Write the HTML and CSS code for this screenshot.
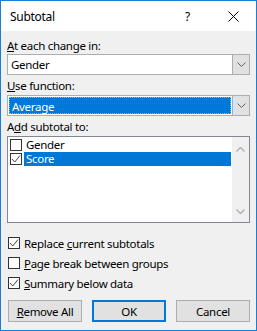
FILE: index.html
```html
<!DOCTYPE html>
<html lang="en">
<head>
    <meta charset="UTF-8">
    <title>Subtotal</title>
    <link rel="stylesheet" href="styles.css">
</head>
<body>
<div class="dialog">
    <div class="titlebar">
        <span class="title">Subtotal</span>
        <span class="help">?</span>
        <span class="close">
            <svg width="11" height="11" viewBox="0 0 11 11"><path d="M0.5 0.5L10.5 10.5M10.5 0.5L0.5 10.5" stroke="#000" stroke-width="1" fill="none"/></svg>
        </span>
    </div>
    <div class="body">
        <div class="field-label first"><u>A</u>t each change in:</div>
        <div class="combo">
            <span class="combo-value">Gender</span>
            <span class="combo-btn">
                <svg width="9" height="5" viewBox="0 0 9 5"><path d="M0.5 0.5L4.5 4.5L8.5 0.5" stroke="#606060" fill="none"/></svg>
            </span>
        </div>

        <div class="field-label"><u>U</u>se function:</div>
        <div class="combo focused">
            <span class="combo-value"><span class="combo-sel">Average</span></span>
            <span class="combo-btn">
                <svg width="9" height="5" viewBox="0 0 9 5"><path d="M0.5 0.5L4.5 4.5L8.5 0.5" stroke="#606060" fill="none"/></svg>
            </span>
        </div>

        <div class="field-label">A<u>d</u>d subtotal to:</div>
        <div class="listbox">
            <ul class="items">
                <li class="item">
                    <span class="check"></span>
                    <span class="item-text">Gender</span>
                </li>
                <li class="item selected">
                    <span class="check">
                        <svg width="10" height="10" viewBox="0 0 10 10"><path d="M1 5L3.8 8L9 1.5" stroke="#444" stroke-width="1" fill="none"/></svg>
                    </span>
                    <span class="item-text">Score</span>
                </li>
            </ul>
            <div class="scrollbar">
                <svg width="9" height="5" viewBox="0 0 9 5"><path d="M0.5 4.5L4.5 0.5L8.5 4.5" stroke="#b0b0b0" stroke-width="1.4" fill="none"/></svg>
                <svg width="9" height="5" viewBox="0 0 9 5"><path d="M0.5 0.5L4.5 4.5L8.5 0.5" stroke="#b0b0b0" stroke-width="1.4" fill="none"/></svg>
            </div>
        </div>

        <div class="options">
            <div class="option">
                <span class="check">
                    <svg width="10" height="10" viewBox="0 0 10 10"><path d="M1 5L3.8 8L9 1.5" stroke="#444" stroke-width="1" fill="none"/></svg>
                </span>
                <span>Replace <u>c</u>urrent subtotals</span>
            </div>
            <div class="option">
                <span class="check"></span>
                <span><u>P</u>age break between groups</span>
            </div>
            <div class="option">
                <span class="check">
                    <svg width="10" height="10" viewBox="0 0 10 10"><path d="M1 5L3.8 8L9 1.5" stroke="#444" stroke-width="1" fill="none"/></svg>
                </span>
                <span><u>S</u>ummary below data</span>
            </div>
        </div>

        <div class="buttons">
            <div class="button"><u>R</u>emove All</div>
            <div class="button default">OK</div>
            <div class="button">Cancel</div>
        </div>
    </div>
</div>
</body>
</html>
```

FILE: styles.css
```css
* {
    padding: 0;
    margin: 0;
    box-sizing: border-box;
}

html, body {
    width: 100%;
    height: 100%;
    background-color: #f0f0f0;
}

body {
    font-family: "Noto Sans", "DejaVu Sans", sans-serif;
    font-size: 11.5px;
    letter-spacing: -0.3px;
    color: #000;
}

.dialog {
    width: 257px;
    height: 331px;
    border: 1px solid #1a7fd4;
    background-color: #f0f0f0;
    display: flex;
    flex-direction: column;
}

.titlebar {
    height: 30px;
    background-color: #fff;
    display: flex;
    align-items: center;
    padding-left: 9px;
}

.title {
    font-size: 12px;
    flex: 1;
}

.help {
    font-size: 12px;
    width: 8px;
    margin-right: 35px;
}

.close {
    display: flex;
    margin-right: 17px;
}

.body {
    padding: 0 6px;
    display: flex;
    flex-direction: column;
}

.field-label {
    line-height: 16px;
    height: 16px;
    margin-top: 3px;
}

.field-label.first {
    margin-top: 7px;
}

.combo {
    height: 21px;
    border: 1px solid #adadad;
    background-color: #fff;
    display: flex;
}

.focused {
    margin-top: 1px;
}

.combo-value {
    flex: 1;
    display: flex;
    align-items: center;
    padding-left: 3px;
    line-height: 17px;
}

.focused .combo-value {
    padding: 1px;
}

.combo-sel {
    flex: 1;
    height: 17px;
    background-color: #0078d7;
    color: #fff;
    padding-left: 2px;
    border: 1px dotted #e8a040;
}

.combo-btn {
    width: 17px;
    background-color: #e1e1e1;
    border-left: 1px solid #adadad;
    display: flex;
    align-items: center;
    justify-content: center;
}

.listbox {
    margin-top: 1px;
    height: 87px;
    border: 1px solid #828790;
    background-color: #fff;
    display: flex;
}

.items {
    list-style: none;
    flex: 1;
    padding: 1px 1px 0 2px;
}

.item {
    height: 14px;
    display: flex;
    align-items: center;
}

.item .check {
    width: 12px;
    height: 12px;
}

.item-text {
    flex: 1;
    height: 14px;
    line-height: 14px;
    padding-left: 2px;
    margin-left: 2px;
}

.selected .item-text {
    background-color: #0078d7;
    color: #fff;
}

.scrollbar {
    width: 17px;
    background-color: #f0f0f0;
    display: flex;
    flex-direction: column;
    align-items: center;
    justify-content: space-between;
    padding: 10px 0 8px;
}

.check {
    width: 12px;
    height: 12px;
    border: 1px solid #333;
    background-color: #fff;
    display: flex;
    align-items: center;
    justify-content: center;
    flex-shrink: 0;
}

.options {
    margin-top: 10px;
}

.option {
    height: 20px;
    display: flex;
    align-items: center;
    padding-left: 1px;
    gap: 4px;
}

.buttons {
    margin-top: 7px;
    display: flex;
    gap: 10px;
    padding-left: 1px;
}

.button {
    width: 74px;
    height: 22px;
    border: 1px solid #adadad;
    background-color: #e1e1e1;
    display: flex;
    align-items: center;
    justify-content: center;
}

.button.default {
    border: 2px solid #0078d7;
}
```
